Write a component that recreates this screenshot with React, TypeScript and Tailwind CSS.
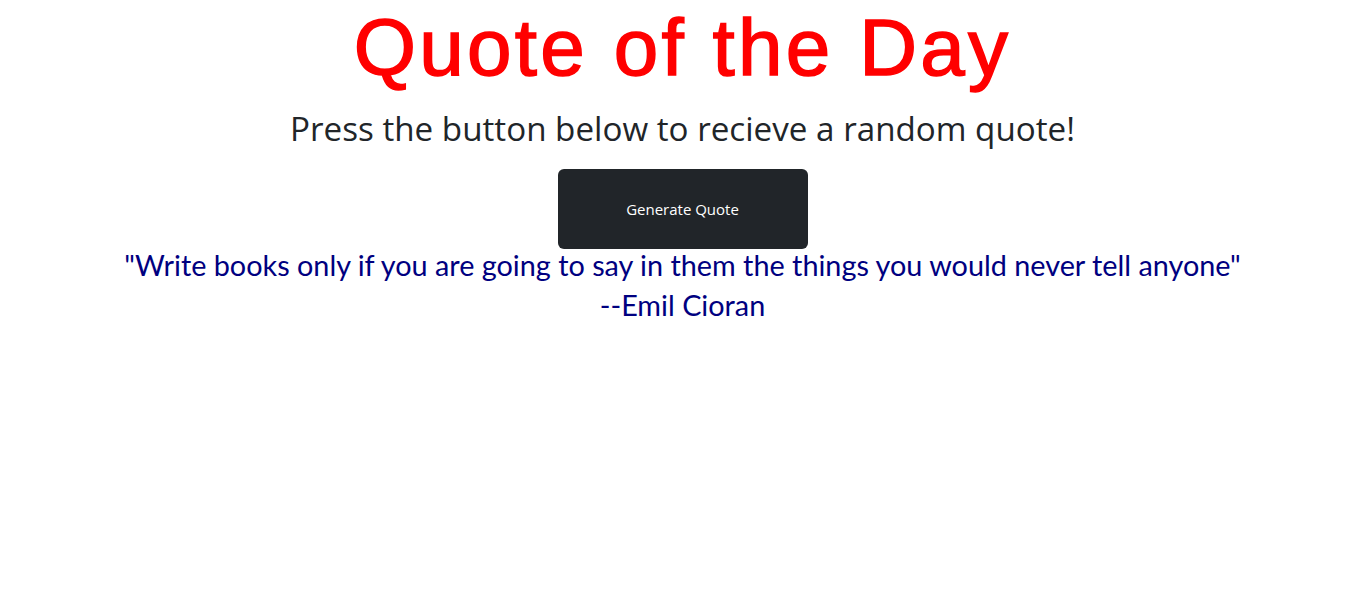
import { useState } from 'react';

const quotes = [
  { text: 'Write books only if you are going to say in them the things you would never tell anyone', author: 'Emil Cioran' },
  { text: 'The only way to do great work is to love what you do.', author: 'Steve Jobs' },
  { text: 'Simplicity is the ultimate sophistication.', author: 'Leonardo da Vinci' },
];

export default function App() {
  const [index, setIndex] = useState(0);
  const quote = quotes[index];

  const handleGenerate = () => {
    let next = Math.floor(Math.random() * quotes.length);
    if (next === index) next = (next + 1) % quotes.length;
    setIndex(next);
  };

  return (
    <div className="min-h-[593px] bg-white flex flex-col items-center text-center">
      {/* Title */}
      <h1 className="h-[100px] leading-[96px] text-[80px] text-[#ff0000] font-['Liberation_Sans',sans-serif] tracking-[3.3px] [-webkit-text-stroke:1.5px_#ff0000]">
        Quote of the Day
      </h1>

      <p className="h-[57px] leading-[57px] text-[33.2px] text-[#212529] font-['Open_Sans',sans-serif]">
        Press the button below to recieve a random quote!
      </p>

      <button
        type="button"
        onClick={handleGenerate}
        className="mt-[12px] w-[250px] h-[80px] rounded-[6px] bg-[#212529] text-white text-[15px] font-['Open_Sans',sans-serif]"
      >
        Generate Quote
      </button>

      {/* Quote */}
      <div className="-mt-[4px] text-[28.8px] leading-[40px] text-[#000080] font-['Lato',sans-serif]">
        <p>"{quote.text}"</p>
        <p>--{quote.author}</p>
      </div>
    </div>
  );
}
